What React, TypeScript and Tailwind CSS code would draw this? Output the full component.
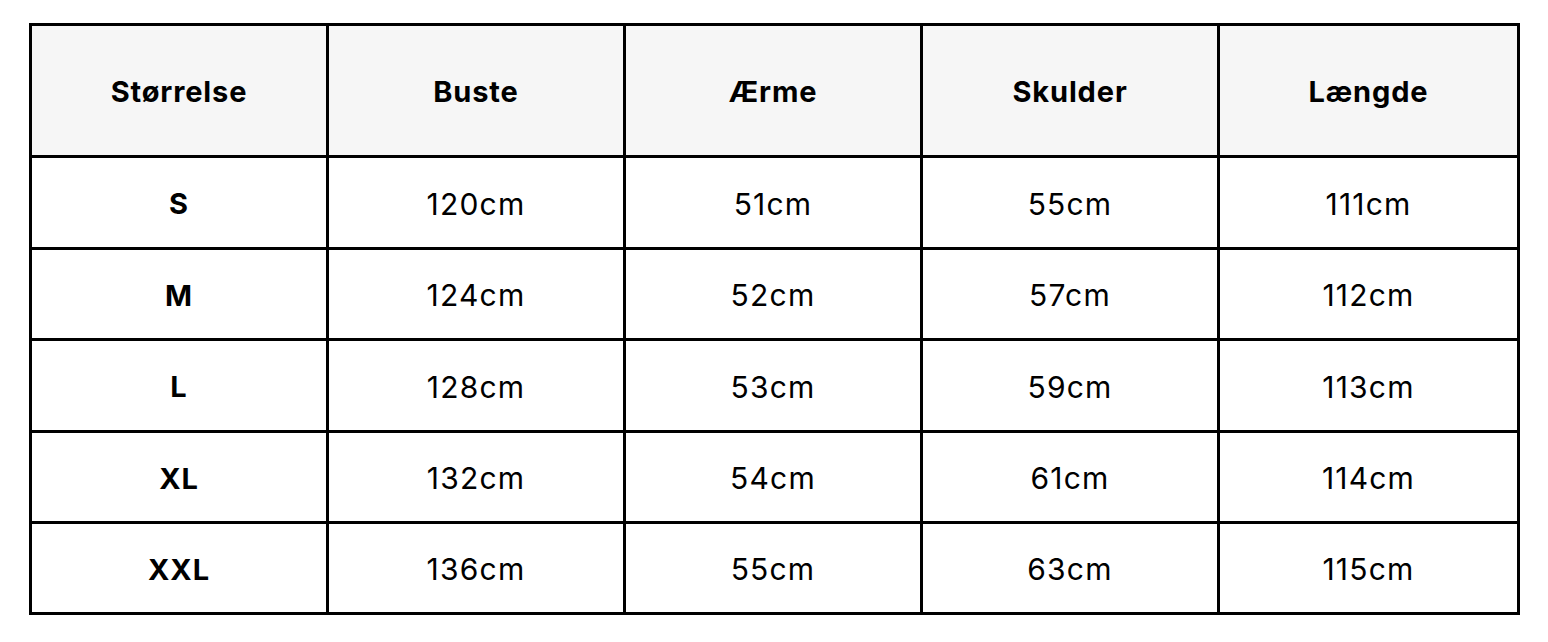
import React from "react";

const headers = ["Størrelse", "Buste", "Ærme", "Skulder", "Længde"];
const rows = [
  ["S", "120cm", "51cm", "55cm", "111cm"],
  ["M", "124cm", "52cm", "57cm", "112cm"],
  ["L", "128cm", "53cm", "59cm", "113cm"],
  ["XL", "132cm", "54cm", "61cm", "114cm"],
  ["XXL", "136cm", "55cm", "63cm", "115cm"],
];
const rowHeights = ["h-[92px]", "h-[91px]", "h-[92px]", "h-[91px]", "h-[88px]"];

export default function App() {
  return (
    <div className="w-[1548px] h-[642px] bg-white pt-[23px] pl-[29px]" style={{ fontFamily: "Inter, 'Noto Sans', sans-serif" }}>
      <div className="w-[1491px] border-[3px] border-black grid grid-cols-5 text-black">
        {headers.map((h, i) => (
          <div
            key={h}
            className={`h-[132px] flex items-center justify-center bg-[#f6f6f6] font-bold text-[29px] tracking-[0.03em] pt-[2px] border-b-[3px] border-black ${i < 4 ? "border-r-[3px]" : ""}`}
          >
            {h}
          </div>
        ))}
        {rows.map((r, ri) =>
          r.map((c, ci) => (
            <div
              key={`${ri}-${ci}`}
              className={`${rowHeights[ri]} ${ri < 4 ? "border-b-[3px]" : ""} flex items-center justify-center pt-[3px] border-black ${ci < 4 ? "border-r-[3px]" : ""} ${ci === 0 ? "font-bold text-[29px] tracking-[0.03em]" : "font-normal text-[30px] tracking-[0.04em]"}`}
            >
              {c}
            </div>
          ))
        )}
      </div>
    </div>
  );
}
